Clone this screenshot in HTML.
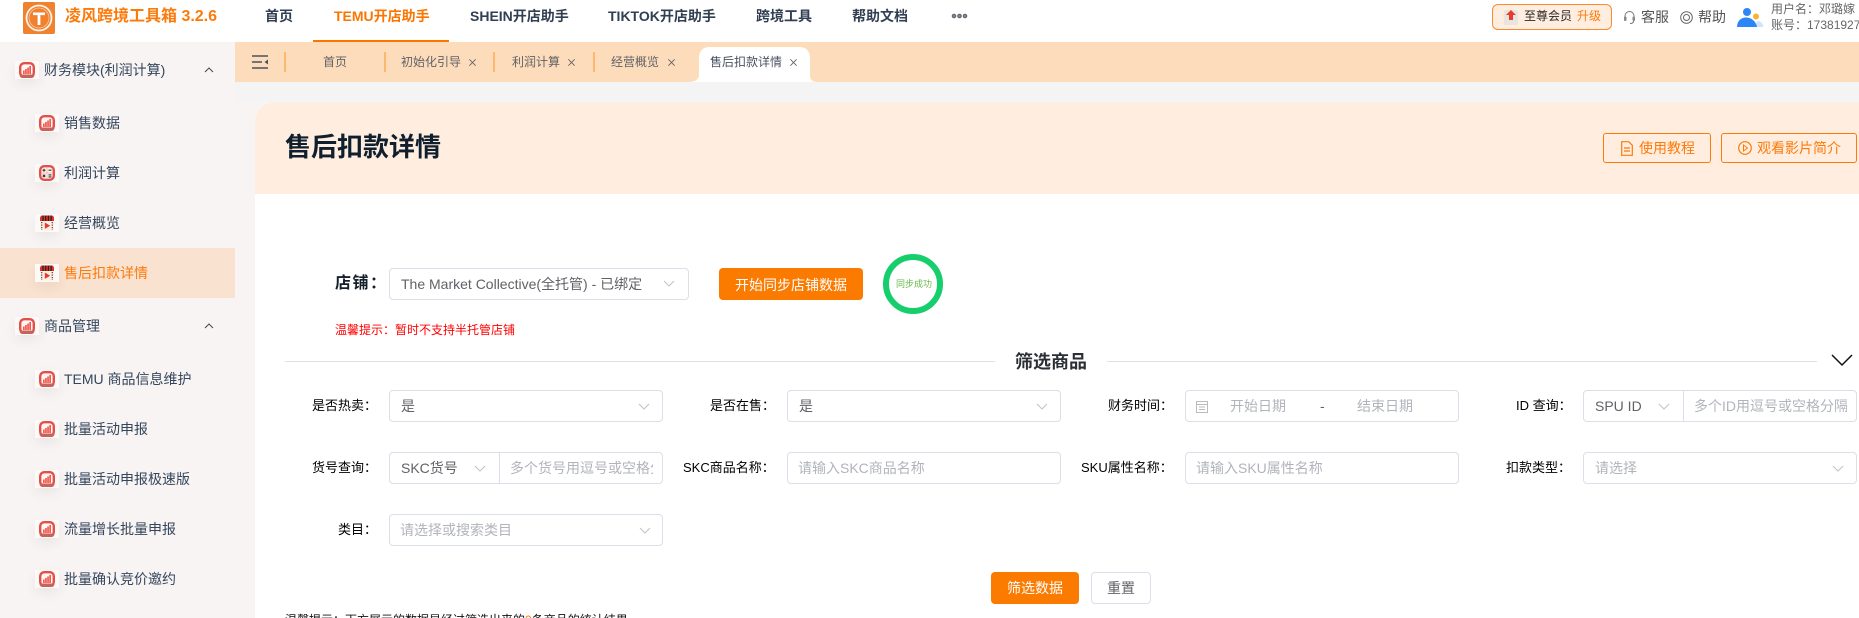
<!DOCTYPE html>
<html lang="zh-CN"><head><meta charset="utf-8"><title>售后扣款详情</title>
<style>
*{box-sizing:border-box}
html{margin:0;padding:0;width:1859px;height:618px;overflow:hidden;background:#fff}
body{margin:0;padding:0;width:1859px;height:618px;overflow:hidden;position:relative;background:#f7f4f3;font-family:"Liberation Sans","Noto Sans CJK SC",sans-serif;font-size:14px;color:#303f52}
#w{position:absolute;left:0;top:0;width:1859px;height:618px;overflow:hidden}
.a{position:absolute}
.t{position:absolute;white-space:nowrap;line-height:20px;height:20px}
.n{font-size:14px;font-weight:700;color:#303f52;top:6px}
.m{font-size:14px;color:#35465c}
.x{font-size:12px;color:#606266;top:52px}
.l{font-size:13px;color:#000}
.b{position:absolute;height:32px;border:1px solid #dcdee8;border-radius:4px;background:#fff}
.v{font-size:14px;color:#606266}
.p{font-size:14px;color:#b1b4bb}
.ic{position:absolute;width:24px;height:18px;background:#fdf9f6;box-shadow:0 5px 12px rgba(0,0,0,.06)}
.ic svg{position:absolute;left:4px;top:1px;width:16px;height:16px}
.sep{position:absolute;top:52px;width:2px;height:20px;background:#fdb76e}
.ch{position:absolute;width:12px;height:7px}
</style></head><body><div id="w">
<svg width="0" height="0" style="position:absolute">
<symbol id="c" viewBox="0 0 16 16"><rect x="1.200" y="1.200" width="13.600" height="13.600" rx="4" fill="#fff6f3" stroke="#e2504a" stroke-width="2.400"/><path d="M.5 12.500h15V13a3 3 0 0 1-3 3h-9a3 3 0 0 1-3-3z" fill="#c8625c"/><rect x="4" y="8.500" width="1.700" height="3.500" fill="#ee5b50"/><rect x="6.100" y="7" width="1.700" height="5" fill="#ee5b50"/><rect x="8.200" y="5.500" width="1.700" height="6.500" fill="#ee5b50"/><rect x="10.300" y="4" width="1.700" height="8" fill="#ee5b50"/></symbol>
<symbol id="k" viewBox="0 0 16 16"><rect x="1.200" y="1.200" width="13.600" height="13.600" rx="4" fill="#fff6f3" stroke="#e2504a" stroke-width="2.400"/><path d="M8 2v12M2 8h12" stroke="#f3a9a2" stroke-width=".8"/><path d="M3.500 5.200h3M5 3.700v3M9.500 5.200h3M3.800 9.700l2.400 2.400M6.200 9.700l-2.400 2.400M9.500 9.900h3M9.500 11.900h3" stroke="#3b2f2e" stroke-width="1.100" fill="none"/></symbol>
<symbol id="f" viewBox="0 0 16 16"><rect x="1" y=".5" width="14" height="15" rx="2.500" fill="#fdf0e3"/><path d="M1 6V3A2.500 2.500 0 0 1 3.500.5h9A2.500 2.500 0 0 1 15 3v3z" fill="#d8362e"/><path d="M4 .5V6M6.700 .5V6M9.400 .5V6M12.100 .5V6" stroke="#2c1a1a" stroke-width="1.200"/><path d="M5.800 7.500l5.400 3.200-5.400 3.200z" fill="#e8382f"/><path d="M2.700 7v8M13.300 7v8" stroke="#444" stroke-width="1.200" stroke-dasharray="1.200 1.300"/></symbol>
<symbol id="d" viewBox="0 0 12 7"><path d="M1 1l5 5 5-5" fill="none" stroke="#c0c4cc" stroke-width="1.100"/></symbol>
<symbol id="u" viewBox="0 0 10 6"><path d="M1 5l4-4 4 4" fill="none" stroke="#404a58" stroke-width="1"/></symbol>
<symbol id="cl" viewBox="0 0 10 10"><path d="M1.500 1.500l7 7M8.500 1.500l-7 7" fill="none" stroke="#666" stroke-width="1"/></symbol>
</svg>

<!-- top bar -->
<div class="a" style="left:0;top:0;width:1859px;height:42px;background:#fff"></div>
<div class="a" style="left:23px;top:2px;width:32px;height:32px;background:#f0822f;border-radius:2px">
<svg width="32" height="32" viewBox="0 0 32 32"><circle cx="16" cy="16" r="12.500" fill="none" stroke="#fff" stroke-width="1.800" opacity=".9"/><circle cx="16" cy="16" r="10" fill="none" stroke="#fff" stroke-width=".8" opacity=".55"/><path d="M10 10.500h12v2.600h-4.600V23h-2.800v-9.900H10z" fill="#fff"/></svg></div>
<div class="t" style="left:65px;top:7px;font-size:16px;font-weight:700;color:#fb7a0a">凌风跨境工具箱 3.2.6</div>
<div class="t n" style="left:265px">首页</div>
<div class="t n" style="left:334px;color:#fb7600">TEMU开店助手</div>
<div class="a" style="left:313px;top:40px;width:136px;height:2px;background:#fb7600"></div>
<div class="t n" style="left:470px">SHEIN开店助手</div>
<div class="t n" style="left:608px">TIKTOK开店助手</div>
<div class="t n" style="left:756px">跨境工具</div>
<div class="t n" style="left:852px">帮助文档</div>
<svg class="a" style="left:951px;top:13px" width="17" height="6" viewBox="0 0 17 6"><g fill="#8a8f98" stroke="#5d6470" stroke-width="1.200"><circle cx="3" cy="3" r="1.700"/><circle cx="8.500" cy="3" r="1.700"/><circle cx="14" cy="3" r="1.700"/></g></svg>

<div class="a" style="left:1492px;top:4px;width:120px;height:26px;border:1px solid #fb8a2a;border-radius:6px;background:#ffeee0"></div>
<svg class="a" style="left:1504px;top:9px" width="14" height="16" viewBox="0 0 14 16"><rect x="0" y="1" width="14" height="15" rx="2" fill="#e8e4df"/><path d="M7 1l5 5H9v5H5V6H2z" fill="#ea3a30"/></svg>
<div class="t" style="left:1524px;top:6px;font-size:12px;color:#2a2a2a">至尊会员</div>
<div class="t" style="left:1577px;top:6px;font-size:12px;color:#fb7a0a">升级</div>
<svg class="a" style="left:1623px;top:10px" width="13" height="15" viewBox="0 0 13 15"><path d="M2 8V6a4.500 4.500 0 0 1 9 0v2" fill="none" stroke="#777" stroke-width="1"/><rect x="1" y="6.500" width="2.500" height="4.500" rx="1" fill="#888"/><rect x="9.500" y="6.500" width="2.500" height="4.500" rx="1" fill="#888"/><path d="M10.500 11c0 2-2 2.500-3.500 2.500" fill="none" stroke="#777"/></svg>
<div class="t" style="left:1641px;top:7px;font-size:14px;color:#555">客服</div>
<svg class="a" style="left:1680px;top:11px" width="13" height="13" viewBox="0 0 13 13"><circle cx="6.500" cy="6.500" r="5.800" fill="none" stroke="#666" stroke-width="1"/><circle cx="6.500" cy="6.500" r="3" fill="none" stroke="#666" stroke-width="1"/></svg>
<div class="t" style="left:1698px;top:7px;font-size:14px;color:#555">帮助</div>
<svg class="a" style="left:1737px;top:7px" width="27" height="21" viewBox="0 0 27 21"><path d="M17 20c5 0 8 0 9.500 0-1-4-3-6-6-6" fill="#cfe3fb"/><circle cx="10" cy="5" r="4" fill="#2c86f8"/><path d="M0 20c0-6 4-9.500 9-9.500S19 14 20 20z" fill="#2c86f8"/><circle cx="19" cy="9.500" r="3" fill="#f9b233"/></svg>
<div class="t" style="left:1771px;top:-1px;font-size:12px;color:#666">用户名：邓璐嫁</div>
<div class="t" style="left:1771px;top:15px;font-size:12px;color:#666">账号：17381927</div>

<!-- tab bar -->
<div class="a" style="left:235px;top:42px;width:1624px;height:40px;background:#fddcbc"></div>
<div class="a" style="left:235px;top:82px;width:1624px;height:20px;background:#f4f4f4"></div>
<svg class="a" style="left:252px;top:55px" width="16" height="14" viewBox="0 0 16 14"><path d="M0 1h16M0 7h10M0 13h16" stroke="#4a5260" stroke-width="1.600"/><path d="M16 4.500v5L12.500 7z" fill="#4a5260"/></svg>
<div class="sep" style="left:284px"></div>
<div class="t x" style="left:323px">首页</div>
<div class="sep" style="left:384px"></div>
<div class="t x" style="left:401px">初始化引导</div>
<svg class="a" style="left:468px;top:58px" width="9" height="9"><use href="#cl"/></svg>
<div class="sep" style="left:493px"></div>
<div class="t x" style="left:512px">利润计算</div>
<svg class="a" style="left:567px;top:58px" width="9" height="9"><use href="#cl"/></svg>
<div class="sep" style="left:593px"></div>
<div class="t x" style="left:611px">经营概览</div>
<svg class="a" style="left:667px;top:58px" width="9" height="9"><use href="#cl"/></svg>
<svg class="a" style="left:688px;top:47px" width="133" height="35" viewBox="0 0 133 35"><path d="M0 35c7 0 11-2 11-8V10A10 10 0 0 1 21 0h91a10 10 0 0 1 10 10v19c0 4 3 6 7 6z" fill="#fff"/></svg>
<div class="t x" style="left:710px;color:#4a5260">售后扣款详情</div>
<svg class="a" style="left:789px;top:58px" width="9" height="9"><use href="#cl"/></svg>

<!-- sidebar -->
<div class="a" style="left:0;top:248px;width:235px;height:50px;background:#fae2d0"></div>
<div class="ic" style="left:15px;top:61px"><svg><use href="#c"/></svg></div>
<div class="t m" style="left:44px;top:60px">财务模块(利润计算)</div>
<svg class="a" style="left:204px;top:67px" width="10" height="6"><use href="#u"/></svg>
<div class="ic" style="left:35px;top:114px"><svg><use href="#c"/></svg></div>
<div class="t m" style="left:64px;top:113px">销售数据</div>
<div class="ic" style="left:35px;top:164px"><svg><use href="#k"/></svg></div>
<div class="t m" style="left:64px;top:163px">利润计算</div>
<div class="ic" style="left:35px;top:214px"><svg><use href="#f"/></svg></div>
<div class="t m" style="left:64px;top:213px">经营概览</div>
<div class="ic" style="left:35px;top:264px"><svg><use href="#f"/></svg></div>
<div class="t m" style="left:64px;top:263px;color:#fb7a0a">售后扣款详情</div>
<div class="ic" style="left:15px;top:317px"><svg><use href="#c"/></svg></div>
<div class="t m" style="left:44px;top:316px">商品管理</div>
<svg class="a" style="left:204px;top:323px" width="10" height="6"><use href="#u"/></svg>
<div class="ic" style="left:35px;top:370px"><svg><use href="#c"/></svg></div>
<div class="t m" style="left:64px;top:369px">TEMU 商品信息维护</div>
<div class="ic" style="left:35px;top:420px"><svg><use href="#c"/></svg></div>
<div class="t m" style="left:64px;top:419px">批量活动申报</div>
<div class="ic" style="left:35px;top:470px"><svg><use href="#c"/></svg></div>
<div class="t m" style="left:64px;top:469px">批量活动申报极速版</div>
<div class="ic" style="left:35px;top:520px"><svg><use href="#c"/></svg></div>
<div class="t m" style="left:64px;top:519px">流量增长批量申报</div>
<div class="ic" style="left:35px;top:570px"><svg><use href="#c"/></svg></div>
<div class="t m" style="left:64px;top:569px">批量确认竞价邀约</div>

<!-- content -->
<div class="a" style="left:255px;top:102px;width:1604px;height:516px;background:#fff;border-top-left-radius:20px"></div>
<div class="a" style="left:255px;top:102px;width:1604px;height:92px;background:#ffeee0;border-top-left-radius:20px"></div>
<div class="t" style="left:285px;top:132px;height:30px;line-height:30px;font-size:26px;font-weight:700;color:#0f1f2e">售后扣款详情</div>
<div class="a" style="left:1603px;top:133px;width:108px;height:30px;border:1px solid #fb7a0a;border-radius:3px"></div>
<svg class="a" style="left:1621px;top:141px" width="12" height="15" viewBox="0 0 12 15"><path d="M.7.7h7l3.600 3.600v10H.7zM3 7h6M3 10h6" fill="none" stroke="#fb7a0a" stroke-width="1.200"/></svg>
<div class="t" style="left:1639px;top:138px;color:#fb7a0a">使用教程</div>
<div class="a" style="left:1721px;top:133px;width:136px;height:30px;border:1px solid #fb7a0a;border-radius:3px"></div>
<svg class="a" style="left:1738px;top:141px" width="14" height="14" viewBox="0 0 14 14"><circle cx="7" cy="7" r="6.300" fill="none" stroke="#fb7a0a" stroke-width="1.200"/><path d="M5.500 4l4 3-4 3z" fill="none" stroke="#fb7a0a"/></svg>
<div class="t" style="left:1757px;top:138px;color:#fb7a0a">观看影片简介</div>

<div class="t" style="left:335px;top:274px;font-size:16px;font-weight:700;color:#16202c;letter-spacing:1.500px">店铺：</div>
<div class="b" style="left:389px;top:268px;width:300px"></div>
<div class="t v" style="left:401px;top:274px;font-size:14px">The Market Collective(全托管) - 已绑定</div>
<svg class="ch" style="left:663px;top:280px"><use href="#d"/></svg>
<div class="t" style="left:335px;top:320px;font-size:12px;color:#f00">温馨提示：暂时不支持半托管店铺</div>
<div class="a" style="left:719px;top:268px;width:144px;height:32px;background:#fb7a00;border-radius:4px"></div>
<div class="t" style="left:735px;top:275px;color:#fff">开始同步店铺数据</div>
<div class="a" style="left:883px;top:254px;width:60px;height:60px;border:6px solid #16cf6c;border-radius:50%"></div>
<div class="t" style="left:896px;top:274px;font-size:9px;color:#66b84a">同步成功</div>

<div class="a" style="left:285px;top:361px;width:710px;height:1px;background:#dfe0e8"></div>
<div class="t" style="left:1015px;top:352px;font-size:18px;font-weight:700;color:#2a2e35">筛选商品</div>
<div class="a" style="left:1107px;top:361px;width:710px;height:1px;background:#dfe0e8"></div>
<svg class="a" style="left:1831px;top:354px" width="22" height="13" viewBox="0 0 22 13"><path d="M1 1l10 10L21 1" fill="none" stroke="#111" stroke-width="1.500"/></svg>

<!-- row 1 -->
<div class="t l" style="left:312px;top:396px">是否热卖：</div>
<div class="b" style="left:389px;top:390px;width:274px"></div>
<div class="t v" style="left:401px;top:396px">是</div>
<svg class="ch" style="left:638px;top:403px"><use href="#d"/></svg>
<div class="t l" style="left:710px;top:396px">是否在售：</div>
<div class="b" style="left:787px;top:390px;width:274px"></div>
<div class="t v" style="left:799px;top:396px">是</div>
<svg class="ch" style="left:1036px;top:403px"><use href="#d"/></svg>
<div class="t l" style="left:1108px;top:396px">财务时间：</div>
<div class="b" style="left:1185px;top:390px;width:274px"></div>
<svg class="a" style="left:1196px;top:400px" width="12" height="13" viewBox="0 0 12 13"><rect x=".5" y="1.500" width="11" height="11" fill="#fff" stroke="#bbb"/><path d="M.5 4.500h11M3 7h6M3 9.500h6" stroke="#bbb"/></svg>
<div class="t p" style="left:1230px;top:396px">开始日期</div>
<div class="t v" style="left:1320px;top:396px">-</div>
<div class="t p" style="left:1357px;top:396px">结束日期</div>
<div class="t l" style="left:1516px;top:396px">ID 查询：</div>
<div class="b" style="left:1583px;top:390px;width:274px"></div>
<div class="a" style="left:1683px;top:391px;width:1px;height:30px;background:#dcdee8"></div>
<div class="t v" style="left:1595px;top:396px">SPU ID</div>
<svg class="ch" style="left:1658px;top:403px"><use href="#d"/></svg>
<div class="a p" style="left:1694px;top:396px;width:153px;height:20px;line-height:20px;overflow:hidden;white-space:nowrap">多个ID用逗号或空格分隔</div>

<!-- row 2 -->
<div class="t l" style="left:312px;top:458px">货号查询：</div>
<div class="b" style="left:389px;top:452px;width:274px"></div>
<div class="a" style="left:499px;top:453px;width:1px;height:30px;background:#dcdee8"></div>
<div class="t v" style="left:401px;top:458px">SKC货号</div>
<svg class="ch" style="left:474px;top:465px"><use href="#d"/></svg>
<div class="a p" style="left:510px;top:458px;width:143px;height:20px;line-height:20px;overflow:hidden;white-space:nowrap">多个货号用逗号或空格分隔</div>
<div class="t l" style="left:683px;top:458px">SKC商品名称：</div>
<div class="b" style="left:787px;top:452px;width:274px"></div>
<div class="t p" style="left:798px;top:458px">请输入SKC商品名称</div>
<div class="t l" style="left:1081px;top:458px">SKU属性名称：</div>
<div class="b" style="left:1185px;top:452px;width:274px"></div>
<div class="t p" style="left:1196px;top:458px">请输入SKU属性名称</div>
<div class="t l" style="left:1506px;top:458px">扣款类型：</div>
<div class="b" style="left:1583px;top:452px;width:274px"></div>
<div class="t p" style="left:1595px;top:458px">请选择</div>
<svg class="ch" style="left:1832px;top:465px"><use href="#d"/></svg>

<!-- row 3 -->
<div class="t l" style="left:338px;top:520px">类目：</div>
<div class="b" style="left:389px;top:514px;width:274px"></div>
<div class="t p" style="left:400px;top:520px">请选择或搜索类目</div>
<svg class="ch" style="left:639px;top:527px"><use href="#d"/></svg>

<div class="a" style="left:991px;top:572px;width:88px;height:32px;background:#fb7a00;border-radius:4px"></div>
<div class="t" style="left:1007px;top:578px;color:#fff">筛选数据</div>
<div class="b" style="left:1091px;top:572px;width:60px"></div>
<div class="t" style="left:1107px;top:578px;color:#606266">重置</div>
<div class="t" style="left:285px;top:610px;font-size:12px;color:#111">温馨提示：下方展示的数据是经过筛选出来的<span style="color:#fb7a00">0</span>条商品的统计结果</div>
</div></body></html>
